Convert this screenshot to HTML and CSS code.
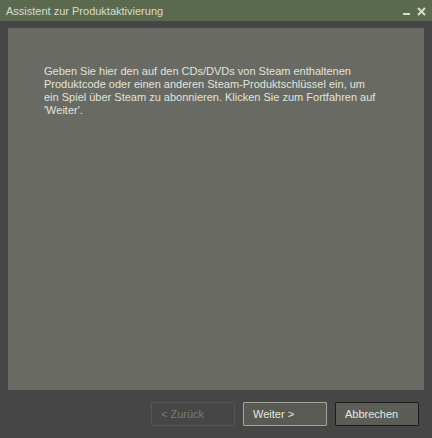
FILE: index.html
```html
<!DOCTYPE html>
<html lang="de">
<head>
<meta charset="utf-8">
<title>Assistent zur Produktaktivierung</title>
<link rel="stylesheet" href="styles.css">
</head>
<body>
<div class="window">
  <div class="titlebar">
    <span class="title">Assistent zur Produktaktivierung</span>
    <div class="controls">
      <svg class="ctl" width="8" height="9" viewBox="0 0 8 9"><rect x="0" y="6" width="7" height="2" fill="#d8dccf"/></svg>
      <svg class="ctl" width="9" height="9" viewBox="0 0 9 9"><path d="M1 1 L8 8 M8 1 L1 8" stroke="#d8dccf" stroke-width="2" fill="none"/></svg>
    </div>
  </div>
  <div class="body">
    <div class="panel">
      <p class="text">Geben Sie hier den auf den CDs/DVDs von Steam enthaltenen<br>Produktcode oder einen anderen Steam-Produktschlüssel ein, um<br>ein Spiel über Steam zu abonnieren. Klicken Sie zum Fortfahren auf<br>'Weiter'.</p>
    </div>
    <div class="buttons">
      <button class="btn disabled">&lt; Zurück</button>
      <button class="btn default">Weiter &gt;</button>
      <button class="btn">Abbrechen</button>
    </div>
  </div>
</div>
</body>
</html>
```

FILE: styles.css
```css
* { box-sizing: border-box; }
html, body { margin: 0; padding: 0; }
body {
  width: 432px;
  height: 438px;
  background: #464646;
  font-family: "Liberation Sans", sans-serif;
  font-size: 11px;
  overflow: hidden;
}
.window {
  width: 432px;
  height: 438px;
  display: flex;
  flex-direction: column;
  background: #464646;
}
.titlebar {
  height: 21px;
  background: #5b6a4e;
  display: flex;
  align-items: center;
  justify-content: space-between;
  padding: 0 6px 0 6px;
}
.title {
  color: #d8dccf;
  font-family: "Liberation Sans", sans-serif;
  font-size: 11px;
  padding-top: 1px;
}
.controls {
  display: flex;
  gap: 6px;
  align-items: center;
  padding-top: 2px;
}
.ctl { display: block; }
.body {
  flex: 1;
  display: flex;
  flex-direction: column;
  padding: 7px 8px 0 8px;
}
.panel {
  height: 362px;
  background: #686a63;
  padding: 37px 0 0 36px;
}
.text {
  margin: 0;
  color: #e2e4dc;
  font-family: "Liberation Sans", sans-serif;
  font-size: 11px;
  line-height: 13px;
}
.buttons {
  display: flex;
  justify-content: flex-end;
  gap: 8px;
  padding: 12px 5px 0 0;
}
.btn {
  width: 84px;
  height: 24px;
  margin: 0;
  font-family: "Liberation Sans", sans-serif;
  font-size: 11px;
  text-align: left;
  padding: 0 0 1px 9px;
  color: #e6e8e0;
  background: #5b5d56;
  border: 1px solid #1c1c1c;
  border-radius: 1px;
}
.btn.default {
  border-color: #a4a69e;
  background: #585a53;
}
.btn.disabled {
  color: #7c7c78;
  background: #464646;
  border-color: #565656;
}
```
